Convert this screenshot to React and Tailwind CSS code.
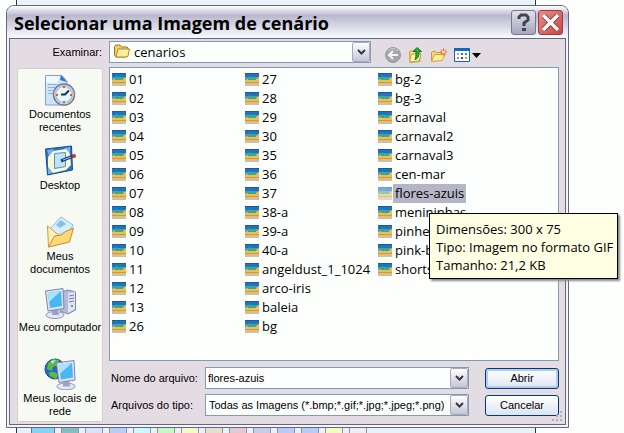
import React, { useState } from "react";

const files = [
  "01", "02", "03", "04", "05", "06", "07", "08", "09", "10", "11", "12", "13", "26",
  "27", "28", "29", "30", "35", "36", "37", "38-a", "39-a", "40-a", "angeldust_1_1024", "arco-iris", "baleia", "bg",
  "bg-2", "bg-3", "carnaval", "carnaval2", "carnaval3", "cen-mar", "flores-azuis", "menininhas", "pinheiros", "pink-bg", "shorts",
];

const swatches = [
  "bg-[#86bcc4]", "bg-[#dbe2f8]", "bg-[#b8cdfa]", "bg-[#ccfafc]", "bg-[#c4f8c4]", "bg-[#f5f8c8]", "bg-[#e4e0cc]",
  "bg-[#e0ccd0]", "bg-[#c8cce8]", "bg-[#b8ccfa]", "bg-[#b8ccfa]", "bg-[#f4fac4]", "bg-[#eeeef0]",
];

const ImageIcon = ({ faded }) => (
  <svg className={faded ? "w-[14px] h-[13px] shrink-0 opacity-60" : "w-[14px] h-[13px] shrink-0"} viewBox="0 0 14 13">
    <path fill="#1c5a98" d="M0 0h14v2H0z" />
    <path fill="#1f74bd" d="M0 1h14v3H0z" />
    <path fill="#3a9fd4" d="M0 4h14v3H0z" />
    <path fill="#f0bd55" d="M0 7l3-1 2 1 3 0 3-1 3-2v7H0z" />
    <path fill="#3fae58" d="M4 3h1v2h1v2H3V5h1zM9 4h1v1h1v2H8V5h1z" />
    <path fill="#c9994c" d="M0 9h14v1H0z" />
    <path fill="#cdbfae" d="M0 11h14v2H0z" />
  </svg>
);

const FolderIcon = () => (
  <svg className="w-4 h-[14px]" viewBox="0 0 16 14">
    <path fill="#f3cf62" stroke="#9a7726" d="M.5 11V2.500L2 1h4l1.500 2H13l1 1v3L13 12l-1 1H2z" />
    <path fill="#ffeb9a" stroke="#b8882b" d="M2 12.500L4 5h11.500L14 12l-1 1H3z" />
    <path stroke="#fff9d2" d="M5 6.500h9" />
  </svg>
);

const RecentIcon = () => (
  <svg className="w-8 h-8" viewBox="0 0 32 32">
    <path fill="#cfe3fb" stroke="#7f9fd8" d="M1.500 1.500H18l5 6V31H1.500z" />
    <path fill="#f2f8ff" d="M2 2h14l-3 7H2z" />
    <path fill="#2d75c9" d="M17 1l6 7-7-2z" />
    <path stroke="#8db2ea" d="M4 10.500h9M4 13.500h7M4 16.500h5M4 19.500h5" />
    <circle cx="20" cy="20.500" r="10.500" fill="#e9f4fa" stroke="#737d8a" strokeWidth="1.500" />
    <circle cx="20" cy="20.500" r="8.500" fill="#e3f5fd" stroke="#b7c3ce" strokeWidth="2" />
    <path stroke="#1d3347" strokeWidth="2" fill="none" d="M17 20.500h4l4-4" />
    <path fill="#e4572b" d="M19 12h2v2h-2zM19 27h2v2h-2zM12 20h2v2h-2zM26 20h2v2h-2z" />
  </svg>
);

const DesktopIcon = () => (
  <svg className="w-8 h-8" viewBox="0 0 32 32">
    <path fill="#2c72ca" stroke="#194b92" d="M1.500 4l26-3 1 24-25 5z" />
    <path fill="#74b4ee" d="M3 5l7-1-5 7zM20 3l6-1v7zM4 22l5 6-5 1z" />
    <path fill="#fff7cf" d="M9 6l13-2 4 5 1 11-5 5-13 3-5-6V12z" />
    <path fill="#bde4ff" stroke="#4c91d2" d="M10.500 8.500l11-1v14l-11 2z" />
    <path stroke="#1e456f" strokeWidth="3" d="M17 16l12-5" />
    <path stroke="#8dcbf0" d="M19 15l8-3" />
    <circle cx="30" cy="11" r="2" fill="#d3322b" />
  </svg>
);

const DocumentsIcon = () => (
  <svg className="w-8 h-8" viewBox="0 0 32 32">
    <path fill="#d5efff" stroke="#8bbce5" d="M6 13L17 1l12 8-6 12-10 6z" />
    <path fill="#87bfe8" d="M12 9l5-5 5 4-6 4z" />
    <path fill="#b8ddf4" d="M14 17l9-1-5 5z" />
    <path fill="#fff1b3" stroke="#d19b34" d="M3.500 10l11 9-3 9-7 3z" />
    <path fill="#ffd878" stroke="#c88b2a" d="M4.500 31l6-11 7-1 3-3 9-4-4 14z" />
  </svg>
);

const Monitor = () => (
  <>
    <ellipse cx="11" cy="28" rx="9" ry="3.500" fill="#e4e8f5" stroke="#8c93b5" />
    <path fill="#9ba4c8" d="M8 21h6l1 7H8z" />
    <path fill="#dce2f6" stroke="#7d86ae" d="M1.500 4L19 1.500l1 20L4 24z" />
    <path fill="#48b5f5" d="M4 6l13-2 1 15-12 2z" />
    <path fill="#a8e5ff" d="M4 6l13-2L5 15z" />
  </>
);

const ComputerIcon = () => (
  <svg className="w-8 h-8" viewBox="0 0 32 32">
    <path fill="#b3b9d9" stroke="#8188b0" d="M17 5l7-2 7.500 2v18L24 27l-8-3z" />
    <path fill="#dfe3f4" d="M24 6l7-1v17l-7 4z" />
    <path stroke="#7179a4" d="M25 9l5-1M25 12l5-1M25 15l5-1" />
    <path fill="#49b85c" d="M27 18h2v2h-2z" />
    <Monitor />
  </svg>
);

const NetworkIcon = () => (
  <svg className="w-8 h-8" viewBox="0 0 32 32">
    <circle cx="11" cy="11" r="10" fill="#2568cb" stroke="#1d4c9a" />
    <path fill="#5dbb3d" d="M4 5l5-4 6 1-2 5-4 2-1 4-5-2zM5 14l6 0 3 3-2 4-6-3z" />
    <path fill="#bce9fb" d="M7 3l5-1-4 4z" />
    <g transform="translate(11 1) scale(1 .98)"><Monitor /></g>
  </svg>
);

const places = [
  { label: "Documentos recentes", icon: <RecentIcon /> },
  { label: "Desktop", icon: <DesktopIcon /> },
  { label: "Meus documentos", icon: <DocumentsIcon /> },
  { label: "Meu computador", icon: <ComputerIcon /> },
  { label: "Meus locais de rede", icon: <NetworkIcon /> },
];

const SelectArrow = () => (
  <span className="pointer-events-none absolute right-[1px] top-[1px] bottom-[1px] w-[18px] border border-[#a9aab9] rounded-[2px] bg-linear-to-b from-white to-[#c5c5d7] flex items-center justify-center">
    <svg className="w-[9px] h-[7px]" viewBox="0 0 9 7"><path fill="none" stroke="#343843" strokeWidth="2" d="M1 1l3.500 3.500L8 1" /></svg>
  </span>
);

const Toolbar = () => (
  <div className="flex gap-[7px] pt-[6px] pl-[14px]">
    <button aria-label="Voltar">
      <svg className="w-4 h-4" viewBox="0 0 16 16">
        <circle cx="8" cy="8" r="7.500" fill="#a6a6a8" stroke="#98989c" />
        <path d="M3 4q5-5 10 0" stroke="#cfcfd1" fill="none" />
        <path fill="none" stroke="#f5f5f5" strokeWidth="2" d="M13 8H4M8 4L4 8l4 4" />
      </svg>
    </button>
    <button aria-label="Um nível acima">
      <svg className="w-4 h-4" viewBox="0 0 16 16">
        <path fill="#f9df7b" stroke="#c9a13c" d="M1.500 4.500l4-1 1 1H12v10l-10 1z" />
        <path fill="#fff0a7" stroke="#c9a13c" d="M1.500 15l2-8H13l-2 7z" />
        <path fill="#2aaa35" stroke="#14732a" d="M9 .5l4.500 4H11c0 5-1 7-4 8 1-2 1-4 1-8H5z" />
      </svg>
    </button>
    <button aria-label="Criar nova pasta">
      <svg className="w-4 h-4" viewBox="0 0 16 16">
        <path fill="#f6d772" stroke="#c49838" d="M.5 14V5.500l1-1h3l1 1H11v5z" />
        <path fill="#ffeda1" stroke="#d2a545" d="M.5 14.500l3-7H14l-3 6z" />
        <path stroke="#ee5626" d="M12.500 1.500v7M9 5h7M10 2.500l5 5M15 2.500l-5 5" />
        <circle cx="12.500" cy="5" r="1.500" fill="#ffe6a0" />
      </svg>
    </button>
    <button aria-label="Exibir" className="flex items-center gap-[2px]">
      <svg className="w-4 h-4" viewBox="0 0 16 16">
        <path fill="#fff" stroke="#1764c8" d="M.5 1.500h15v13H.5z" />
        <path fill="#1764c8" d="M0 1h16v3H0z" />
        <path fill="#98a6d8" d="M3 6h2v2H3z" /><path fill="#3467bd" d="M7 6h2v2H7z" /><path fill="#39a64d" d="M11 6h2v2h-2z" />
        <path fill="#e7795b" d="M3 10h2v2H3z" /><path fill="#294ca0" d="M7 10h2v2H7z" /><path fill="#c59a3a" d="M11 10h2v2h-2z" />
      </svg>
      <svg className="w-[9px] h-[5px]" viewBox="0 0 9 5"><path d="M0 0h9L4.500 5z" /></svg>
    </button>
  </div>
);

const Tooltip = () => (
  <div role="tooltip" className="absolute z-10 left-[51px] top-[29px] w-[189px] border border-black bg-[#ffffe4] px-[6px] pt-[6px] pb-1 leading-[18px] shadow-[2px_2px_2px_#888] whitespace-nowrap">
    <p>Dimensões: 300 x 75</p>
    <p>Tipo: Imagem no formato GIF</p>
    <p>Tamanho: 21,2 KB</p>
  </div>
);

const App = () => {
  const [selected, setSelected] = useState("flores-azuis");
  const [name, setName] = useState("flores-azuis");

  const pick = (file) => {
    setSelected(file);
    setName(file);
  };

  return (
    <main className="relative min-h-screen overflow-hidden bg-[#fdfffd] pt-[5px] pl-[6px] pr-[55px] text-[11px] leading-[13px] text-black font-['Liberation_Sans',sans-serif]">
      <div className="absolute inset-y-0 left-4 right-[88px] overflow-hidden border-x border-[#333] bg-[#e9f1f9] flex items-end gap-[6px] pl-[14px]">
        <div className="h-[7px] w-6 shrink-0 border-x border-[#777] bg-[#85d2f6]" />
        {swatches.map((color, i) => (
          <div key={i} className={`h-[7px] w-[18px] shrink-0 border-x border-[#9a90a4] ${color}`} />
        ))}
      </div>

      <section className="relative border border-[#66667f] rounded-t-lg bg-[#f4f4fa]" role="dialog" aria-labelledby="title">
        <header className="h-8 rounded-t-[7px] bg-linear-to-b from-white via-[#b9b9ce] via-30% to-[#fafbff] flex items-center pl-[7px] pr-[5px]">
          <h1 id="title" className="mr-auto pt-[2px] text-[18px] leading-[24px] font-bold font-['Open_Sans',sans-serif]">
            Selecionar uma Imagem de cenário
          </h1>
          <button aria-label="Ajuda" className="w-[25px] h-[25px] mr-[2px] rounded-[3px] border border-[#777794] bg-linear-to-b from-[#e1e1ee] to-[#a6a6bc] flex items-center justify-center">
            <svg className="w-[13px] h-[18px]" viewBox="0 0 13 18">
              <path fill="none" stroke="#44444c" strokeWidth="3" d="M2 6V4l2-2h5l2 2v3L7 10v3" />
              <path fill="#44444c" d="M5 15h4v3H5z" />
            </svg>
          </button>
          <button aria-label="Fechar" className="w-[25px] h-[25px] rounded-[3px] border border-[#94404a] bg-linear-to-br from-[#ec8c84] to-[#c9444a] flex items-center justify-center">
            <svg className="w-[17px] h-[17px]" viewBox="0 0 17 17">
              <path stroke="#7c2c34" strokeWidth="5" d="M1 1l15 15M16 1L1 16" />
              <path stroke="white" strokeWidth="3.500" d="M1 1l15 15M16 1L1 16" />
            </svg>
          </button>
        </header>

        <div className="relative mx-[2px] mb-[2px] pt-[2px] pl-[7px] pr-[6px] pb-[2px] border border-[#66667f] bg-[#e3dde3]">
          <div className="h-[26px] flex items-start">
            <label htmlFor="folder" className="w-[92px] pr-[7px] pt-[5px] text-right">Examinar:</label>
            <div className="relative w-[262px]">
              <select id="folder" className="appearance-none block w-full h-[22px] border border-[#7f9db9] bg-[#fdfffd] pl-[24px] text-[13px] font-['Open_Sans',sans-serif]">
                <option>cenarios</option>
              </select>
              <span className="pointer-events-none absolute left-[5px] top-[3px]"><FolderIcon /></span>
              <SelectArrow />
            </div>
            <Toolbar />
          </div>

          <div className="flex">
            <nav className="w-[86px] mr-[6px] mt-px border border-[#d6d0cc] bg-[#f7f9f3]">
              {places.map((place) => (
                <button key={place.label} className="w-full h-[71px] last:h-[68px] pt-[5px] flex flex-col items-center justify-start gap-[2px]">
                  {place.icon}
                  <span>{place.label}</span>
                </button>
              ))}
            </nav>

            <div className="grow min-w-0">
              <div className="h-[294px] border border-[#7f9db9] bg-[#fdfffd] p-[2px]">
                <ul className="h-[266px] flex flex-col flex-wrap content-start text-[13px] leading-[19px] font-['Open_Sans',sans-serif]">
                  {files.map((file) => (
                    <li key={file} className="relative w-[133px] h-[19px]">
                      <button className="flex items-center" onClick={() => pick(file)}>
                        <ImageIcon faded={selected === file} />
                        <span className={selected === file ? "ml-px px-[2px] bg-[#b5b5c5]" : "ml-px px-[2px]"}>{file}</span>
                      </button>
                      {file === "flores-azuis" && selected === file && <Tooltip />}
                    </li>
                  ))}
                </ul>
              </div>

              <form className="mt-[6px] grid grid-cols-[96px_1fr_74px] gap-y-[5px] items-center" onSubmit={(e) => e.preventDefault()}>
                <label htmlFor="name" className="pl-[2px]">Nome do arquivo:</label>
                <div className="relative mr-4">
                  <input
                    id="name"
                    className="block w-full h-[22px] border border-[#7f9db9] bg-[#fdfffd] pl-[2px]"
                    value={name}
                    onChange={(e) => setName(e.target.value)}
                  />
                  <SelectArrow />
                </div>
                <button className="h-[21px] border border-[#003c74] rounded-[3px] bg-linear-to-b from-white to-[#dde4f4] shadow-[inset_0_0_0_2px_#b5cbf0]">Abrir</button>

                <label htmlFor="type" className="pl-[2px]">Arquivos do tipo:</label>
                <div className="relative mr-4">
                  <select id="type" className="appearance-none block w-full h-[22px] border border-[#7f9db9] bg-[#fdfffd] pl-[3px]">
                    <option>Todas as Imagens (*.bmp;*.gif;*.jpg;*.jpeg;*.png)</option>
                  </select>
                  <SelectArrow />
                </div>
                <button type="button" className="h-[21px] border border-[#003c74] rounded-[3px] bg-linear-to-b from-white to-[#dce4f2]">Cancelar</button>
              </form>
            </div>
          </div>

          <svg className="absolute right-[2px] bottom-[2px] w-[11px] h-[11px]" viewBox="0 0 11 11">
            <path fill="#b3afa5" d="M8 0h2v2H8zM4 4h2v2H4zM8 4h2v2H8zM0 8h2v2H0zM4 8h2v2H4zM8 8h2v2H8z" />
          </svg>
        </div>
      </section>
    </main>
  );
};

export default App;
